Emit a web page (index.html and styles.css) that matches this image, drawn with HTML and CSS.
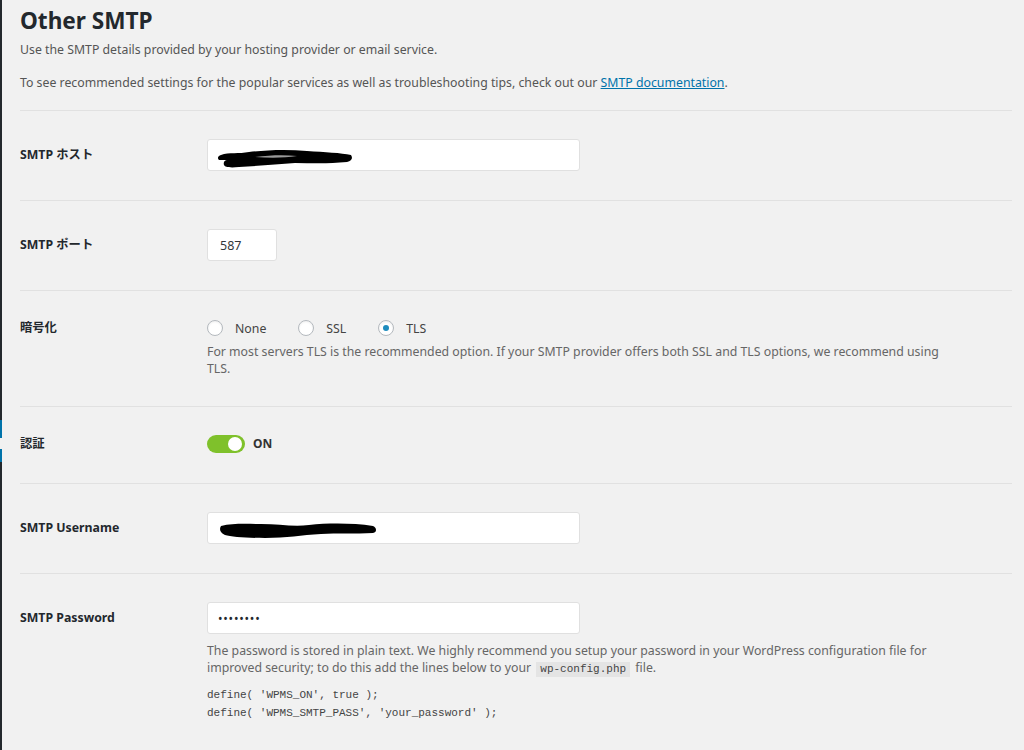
FILE: index.html
```html
<!DOCTYPE html>
<html lang="ja">
<head>
    <meta charset="UTF-8">
    <title>Other SMTP</title>
    <link rel="stylesheet" href="styles.css">
</head>
<body>
    <div class="admin-strip">
        <div class="strip-current"></div>
    </div>

    <div class="wrap">
        <h2 class="section-title">Other SMTP</h2>
        <p class="section-desc">Use the SMTP details provided by your hosting provider or email service.</p>
        <p class="section-desc section-desc-last">To see recommended settings for the popular services as well as troubleshooting tips, check out our <a href="#">SMTP documentation</a>.</p>

        <div class="setting-row">
            <label class="setting-label" for="smtpHost">SMTP ホスト</label>
            <div class="setting-field">
                <div class="input-wrap">
                    <input type="text" id="smtpHost" class="text-input">
                    <svg class="redact" width="140" height="24" viewBox="0 0 140 24">
                        <path d="M6 9 C14 6 24 8 34 6 C50 4 72 3 92 5 C110 6 126 7 136 9 C138 12 137 15 132 16 C112 18 96 17 80 17 C62 18 44 20 24 21 C14 22 10 21 9 19 C8 16 10 14 12 14 L4 14 C2 12 3 10 6 9 Z" fill="#000"/>
                        <path d="M40 11 C56 9 70 9 82 10 C70 12 54 12 40 11 Z" fill="#fff" opacity="0.6"/>
                    </svg>
                </div>
            </div>
        </div>

        <div class="setting-row">
            <label class="setting-label" for="smtpPort">SMTP ポート</label>
            <div class="setting-field">
                <input type="text" id="smtpPort" class="text-input text-input-small" value="587">
            </div>
        </div>

        <div class="setting-row">
            <span class="setting-label setting-label-short">暗号化</span>
            <div class="setting-field">
                <div class="radio-group">
                    <label class="radio-item"><input type="radio" name="enc"> None</label>
                    <label class="radio-item"><input type="radio" name="enc"> SSL</label>
                    <label class="radio-item"><input type="radio" name="enc" checked> TLS</label>
                </div>
                <p class="field-desc field-desc-tight">For most servers TLS is the recommended option. If your SMTP provider offers both SSL and TLS options, we recommend using TLS.</p>
            </div>
        </div>

        <div class="setting-row">
            <span class="setting-label setting-label-short">認証</span>
            <div class="setting-field">
                <div class="toggle">
                    <span class="toggle-track"><span class="toggle-knob"></span></span>
                    <span class="toggle-text">ON</span>
                </div>
            </div>
        </div>

        <div class="setting-row">
            <label class="setting-label" for="smtpUser">SMTP Username</label>
            <div class="setting-field">
                <div class="input-wrap">
                    <input type="text" id="smtpUser" class="text-input">
                    <svg class="redact redact-user" width="162" height="22" viewBox="0 0 162 22">
                        <path d="M4 7 C16 4 30 5 44 5 C62 5 76 8 92 6 C112 4 136 4 156 7 C160 9 160 13 156 14 C138 15 120 14 104 15 C84 16 70 19 48 19 C30 19 14 18 8 16 C3 14 2 10 4 7 Z" fill="#000"/>
                    </svg>
                </div>
            </div>
        </div>

        <div class="setting-row">
            <label class="setting-label" for="smtpPass">SMTP Password</label>
            <div class="setting-field">
                <input type="password" id="smtpPass" class="text-input password-input" value="abcdefgh">
                <p class="field-desc">The password is stored in plain text. We highly recommend you setup your password in your WordPress configuration file for improved security; to do this add the lines below to your <code>wp-config.php</code> file.</p>
                <pre class="code-sample">define( 'WPMS_ON', true );
define( 'WPMS_SMTP_PASS', 'your_password' );</pre>
            </div>
        </div>
    </div>
</body>
</html>
```

FILE: styles.css
```css
* {
    box-sizing: border-box;
}

body {
    margin: 0;
    background: #f1f1f1;
    color: #444;
    font-family: "Noto Sans", "Noto Sans CJK JP", sans-serif;
    font-size: 12.3px;
    display: flex;
    min-height: 750px;
}

.admin-strip {
    width: 2px;
    flex-shrink: 0;
    background: #23282d;
}

.strip-current {
    position: relative;
    margin-top: 420px;
    height: 42px;
    background: #0073aa;
}

.strip-current::after {
    content: "";
    position: absolute;
    left: 0;
    top: 18px;
    width: 2px;
    height: 11px;
    background: #f1f1f1;
}

.wrap {
    flex: 1;
    padding: 0 12px 0 18px;
}

.section-title {
    margin: 0;
    padding-top: 8px;
    font-size: 22.6px;
    line-height: 26px;
    font-weight: 700;
    color: #23282d;
}

.section-desc {
    margin: 7px 0 0;
    line-height: 18px;
    color: #555;
}

.section-desc + .section-desc {
    margin-top: 15px;
}

.section-desc-last {
    padding-bottom: 18px;
    border-bottom: 1px solid #e1e1e1;
}

.section-desc a {
    color: #0073aa;
}

.setting-row {
    display: grid;
    grid-template-columns: 187px 1fr;
    padding: 28px 0 29px;
    border-bottom: 1px solid #e1e1e1;
}

.setting-label {
    font-weight: 700;
    color: #23282d;
    line-height: 32px;
}

.setting-label-short {
    line-height: 18px;
}

.input-wrap {
    position: relative;
    width: 373px;
}

.text-input {
    display: block;
    width: 373px;
    height: 32px;
    padding: 0 12px;
    margin: 0;
    border: 1px solid #e0e0e0;
    border-radius: 3px;
    background: #fff;
    color: #32373c;
    font-family: "Noto Sans", sans-serif;
    font-size: 12.5px;
    outline: none;
}

.text-input-small {
    width: 70px;
}

.password-input {
    padding-left: 10px;
    font-size: 12px;
    letter-spacing: 0.8px;
    color: #23282d;
}

.redact {
    position: absolute;
    left: 8px;
    top: 7px;
}

.redact-user {
    left: 10px;
    top: 7px;
}

.radio-group {
    display: flex;
    gap: 32px;
    height: 18px;
    align-items: center;
}

.radio-item {
    display: flex;
    align-items: center;
    gap: 12px;
    color: #444;
}

.radio-item input {
    appearance: none;
    margin: 0;
    width: 16px;
    height: 16px;
    border: 1px solid #b4b9be;
    border-radius: 50%;
    background: #fff;
    box-shadow: inset 0 1px 2px rgba(0, 0, 0, 0.07);
    display: flex;
    align-items: center;
    justify-content: center;
}

.radio-item input:checked::before {
    content: "";
    width: 6px;
    height: 6px;
    border-radius: 50%;
    background: #1e8cbe;
}

.field-desc {
    margin: 8px 0 0;
    max-width: 740px;
    line-height: 17px;
    color: #666;
}

.field-desc-tight {
    margin-top: 6px;
}

.field-desc code {
    display: inline-block;
    font-family: "Liberation Mono", monospace;
    font-size: 11px;
    line-height: 15px;
    background: #e4e4e4;
    padding: 0 4px;
    margin: 0 2px;
    color: #444;
}

.code-sample {
    margin: 9px 0 0;
    font-family: "Liberation Mono", monospace;
    font-size: 11px;
    line-height: 18px;
    color: #444;
}

.toggle {
    display: flex;
    align-items: flex-start;
    gap: 8px;
    height: 19px;
}

.toggle-track {
    display: flex;
    justify-content: flex-end;
    align-items: center;
    width: 38px;
    height: 18px;
    padding: 0 3px;
    border-radius: 9px;
    background: #7fc12b;
}

.toggle-knob {
    width: 14px;
    height: 14px;
    border-radius: 50%;
    background: #fff;
}

.toggle-text {
    font-size: 12px;
    line-height: 18px;
    font-weight: 700;
    color: #333;
}
```
